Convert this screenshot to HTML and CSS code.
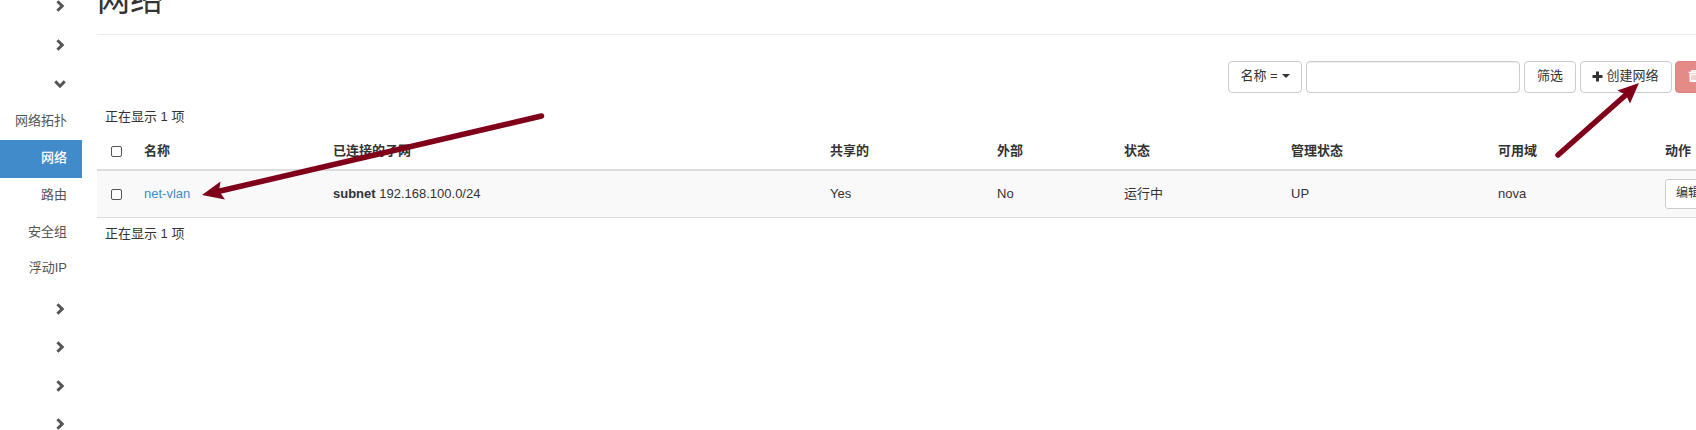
FILE: index.html
```html
<!DOCTYPE html>
<html lang="zh-CN">
<head>
<meta charset="utf-8">
<title>网络</title>
<link rel="stylesheet" href="styles.css">
</head>
<body>
<svg class="symbols" width="0" height="0">
  <symbol id="chevron" viewBox="0 0 12 12"><path d="M3.4 1.300 8.200 6 3.400 10.700" fill="none" stroke="currentColor" stroke-width="3"/></symbol>
</svg>
<div class="page">
  <nav class="sidebar">
    <div class="group"><svg class="chevron"><use href="#chevron"/></svg></div>
    <div class="group"><svg class="chevron"><use href="#chevron"/></svg></div>
    <div class="group"><svg class="chevron open"><use href="#chevron"/></svg></div>
    <ul class="panel">
      <li class="item">网络拓扑</li>
      <li class="item active">网络</li>
      <li class="item">路由</li>
      <li class="item">安全组</li>
      <li class="item">浮动IP</li>
    </ul>
    <div class="group"><svg class="chevron"><use href="#chevron"/></svg></div>
    <div class="group"><svg class="chevron"><use href="#chevron"/></svg></div>
    <div class="group"><svg class="chevron"><use href="#chevron"/></svg></div>
    <div class="group"><svg class="chevron"><use href="#chevron"/></svg></div>
  </nav>
  <main class="content">
    <header class="page-header"><h1>网络</h1></header>
    <div class="toolbar">
      <button class="btn filter-type">名称 =<span class="caret"></span></button>
      <input class="search" type="text">
      <button class="btn filter">筛选</button>
      <button class="btn create"><svg class="plus" viewBox="0 0 11 11"><path d="M5.5 .5v10M.5 5.5h10" stroke="currentColor" stroke-width="3"/></svg>创建网络</button>
      <button class="btn danger"><svg class="trash" viewBox="0 0 12 12"><path d="M4 2V.8h4V2M.5 2.5h11" fill="none" stroke="currentColor" stroke-width="1.4"/><path d="M1.5 3.5h9V11q0 1-1 1h-7q-1 0-1-1z" fill="currentColor"/><path d="M4 5v5M6 5v5M8 5v5" stroke="#e48a87" stroke-width=".8"/></svg></button>
    </div>
    <div class="count">正在显示 1 项</div>
    <div class="table">
      <div class="row head">
        <span><i class="check"></i></span><span>名称</span><span>已连接的子网</span><span>共享的</span><span>外部</span><span>状态</span><span>管理状态</span><span>可用域</span><span>动作</span>
      </div>
      <div class="row data">
        <span><i class="check"></i></span><span><a class="link">net-vlan</a></span><span><b>subnet</b> 192.168.100.0/24</span><span>Yes</span><span>No</span><span>运行中</span><span>UP</span><span>nova</span><span><button class="btn small">编辑网络</button></span>
      </div>
    </div>
    <div class="count bottom">正在显示 1 项</div>
  </main>
  <svg class="arrows" viewBox="0 0 1696 430">
    <g stroke="#80001a" stroke-width="5.500" stroke-linecap="round"><path d="M541.500 116 218 191.500"/><path d="M1558 155 1628 93"/></g>
    <g fill="#80001a"><path d="M202 195 220.500 181.500 219 191 225 199.500z"/><path d="M1639 83 1617.500 90.500 1626 95 1630 103.500z"/></g>
  </svg>
</div>
</body>
</html>
```
FILE: styles.css
```css
* { box-sizing: border-box; }
body {
  margin: 0;
  overflow: hidden;
  background: #fff;
  color: #333;
  font: 13px/18px "Liberation Sans", "Noto Sans CJK SC", sans-serif;
}
.symbols { position: absolute; }
.page { position: relative; display: flex; width: 1696px; height: 430px; overflow: hidden; }
.sidebar { flex: none; width: 82px; margin-top: -14px; color: #555; }
.group { display: flex; justify-content: flex-end; align-items: center; height: 39px; padding-right: 16px; }
.panel ~ .group { height: 38.6px; }
.chevron { width: 12px; height: 12px; }
.chevron.open { transform: rotate(90deg); }
.panel { list-style: none; margin: 0; padding: 0 0 1px; }
.item { display: flex; align-items: center; justify-content: flex-end; height: 37px; padding: 0 15px 2px 0; white-space: nowrap; }
.item.active { height: 38px; background: #428bca; color: #fff; font-weight: 500; }
.item.active ~ .item { height: 36.8px; padding-bottom: 3px; }
.content { flex: none; width: 1760px; margin-left: 15px; }
.page-header { display: flex; align-items: flex-end; height: 35px; padding-bottom: 16px; border-bottom: 1px solid #eee; }
h1 { margin: 0; font-size: 33px; line-height: 36px; font-weight: 400; }
.toolbar { display: flex; gap: 4px; margin: 26px 0 0 1131px; }
.btn {
  display: flex; align-items: center; justify-content: center; flex: none;
  height: 32px; padding: 0 0 2px; border: 1px solid #ccc; border-radius: 4px;
  background: #fff; color: #333; font: inherit; white-space: nowrap;
}
.filter-type { width: 74px; }
.caret { margin-left: 4px; border: 4px solid transparent; border-top-color: #333; border-bottom: 0; }
.search { width: 214px; height: 32px; border: 1px solid #ccc; border-radius: 4px; box-shadow: inset 0 1px 1px rgba(0, 0, 0, .075); }
.filter { width: 52px; }
.create { width: 92px; padding-right: 1px; }
.plus { width: 11px; height: 11px; margin-right: 3px; }
.danger { width: 90px; justify-content: flex-start; padding-left: 12px; margin-left: -1px; background: #e48a87; border-color: #df817d; color: #fff; }
.trash { width: 12px; height: 12px; }
.count { height: 41px; padding: 15px 8px 0; }
.row { display: grid; grid-template-columns: 39px 189px 497px 167px 127px 167px 207px 167px 200px; align-items: center; }
.row > span { padding-left: 8px; white-space: nowrap; }
.head { height: 37px; border-bottom: 2px solid #ddd; font-weight: 700; }
.head > span:not(:first-child) { padding-bottom: 2px; }
.data { height: 47px; border-bottom: 1px solid #ddd; background: #f9f9f9; }
.check { display: block; width: 11px; height: 11px; margin-left: 6px; border: 1px solid #555; border-radius: 2px; background: #fff; }
.link { color: #428bca; }
.small { width: 80px; height: 30px; border-radius: 3px; font-size: 12px; justify-content: flex-start; padding-left: 10px; }
.count.bottom { padding-top: 7px; }
.arrows { position: absolute; left: 0; top: 0; width: 1696px; height: 430px; }
```
